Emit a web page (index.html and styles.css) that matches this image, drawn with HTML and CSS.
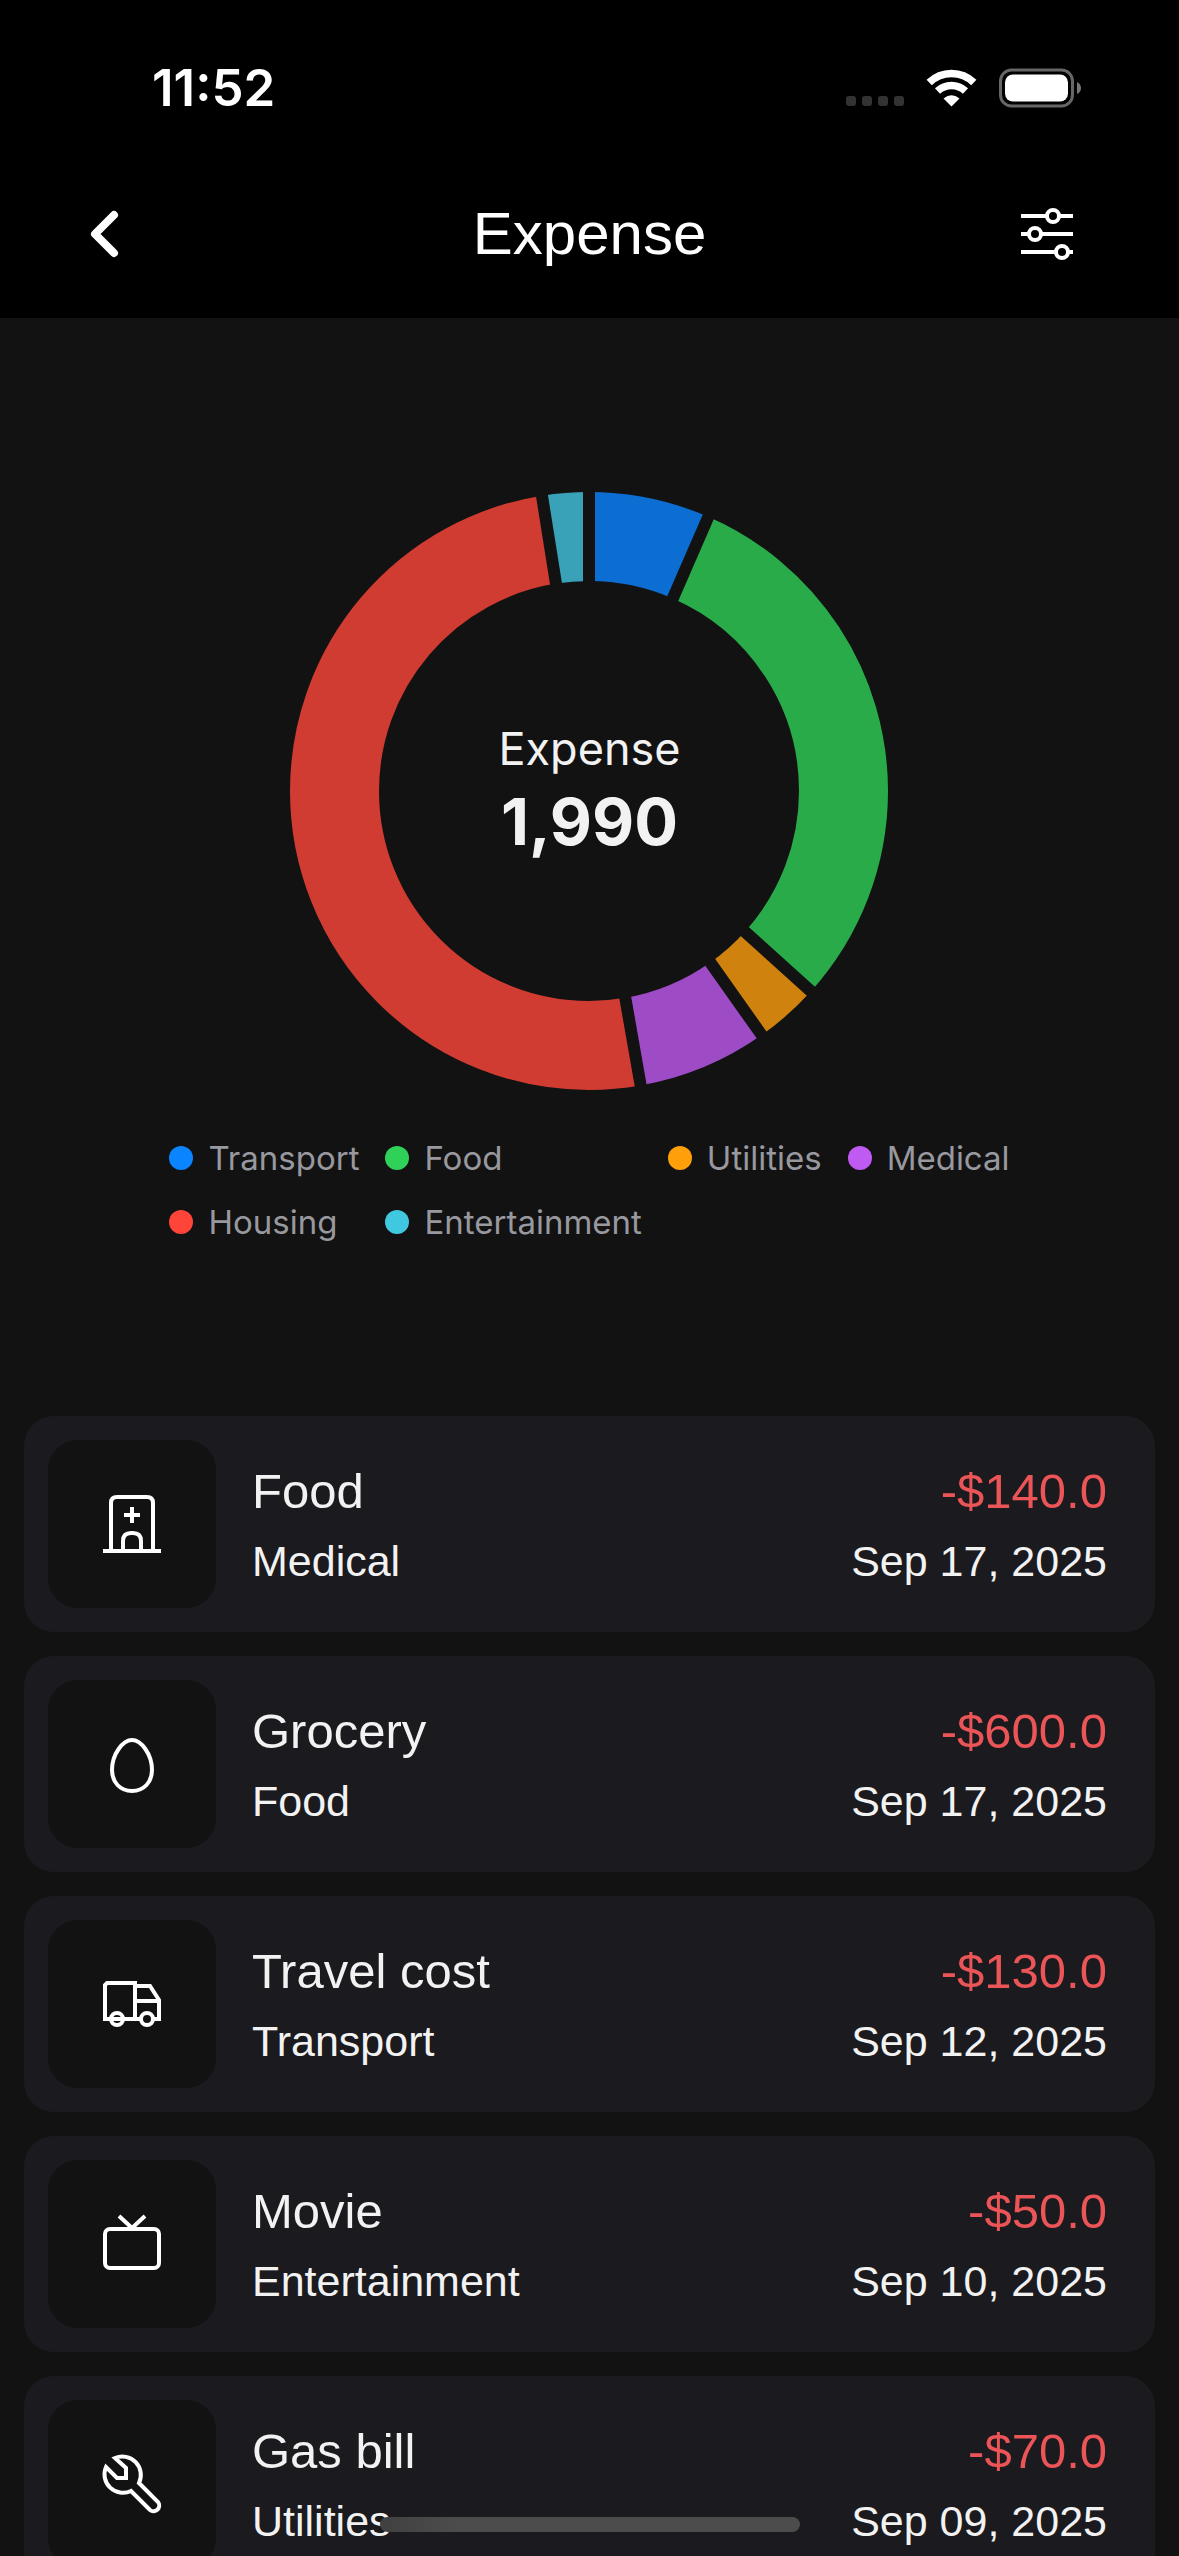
FILE: index.html
```html
<!DOCTYPE html>
<html lang="en">
<head>
  <meta charset="utf-8">
  <meta name="viewport" content="width=device-width, initial-scale=1">
  <title>Expense</title>
  <link rel="stylesheet" href="styles.css">
</head>
<body>
<div class="app">
  <header class="header">
    <div class="status">
      <span class="status-time">11:52</span>
      <div class="status-icons">
        <svg class="status-signal" width="58" height="10" viewBox="0 0 58 10" fill="#333" aria-hidden="true">
          <rect width="10" height="10" rx="3"/><rect x="16" width="10" height="10" rx="3"/><rect x="32" width="10" height="10" rx="3"/><rect x="48" width="10" height="10" rx="3"/>
        </svg>
        <svg width="51" height="38" viewBox="0 0 51 38" fill="none" stroke="#fff" aria-hidden="true">
          <path d="M3.200 13.500A32 32 0 0 1 47.800 13.500" stroke-width="7.500"/>
          <path d="M11.500 22A20.500 20.500 0 0 1 39.500 22" stroke-width="7.500"/>
          <path d="M25.500 37.500L17.500 29.500Q25.500 23 33.500 29.500Z" fill="#fff" stroke="none"/>
        </svg>
        <svg width="83" height="40" viewBox="0 0 83 40" aria-hidden="true">
          <rect x="1.500" y="2" width="72" height="36" rx="11" fill="none" stroke="#666" stroke-width="3"/>
          <rect x="6" y="6.500" width="63" height="27" rx="8" fill="#fff"/>
          <path d="M78 14Q82 16 82 20T78 26Z" fill="#777"/>
        </svg>
      </div>
    </div>
    <nav class="nav">
      <button class="icon-button" type="button" aria-label="Back">
        <svg width="72" height="72" viewBox="0 0 72 72" fill="none" stroke="#fff" stroke-width="8" stroke-linecap="round" stroke-linejoin="round"><path d="M42 17L23 36L42 55"/></svg>
      </button>
      <h1 class="nav-title">Expense</h1>
      <button class="icon-button icon-button-end" type="button" aria-label="Filters">
        <svg width="72" height="72" viewBox="0 0 72 72" fill="none" stroke="#fff" stroke-width="4"><path d="M10 18H62M10 36H62M10 54H62"/><g fill="#000"><circle cx="42" cy="18" r="6"/><circle cx="24" cy="36" r="6"/><circle cx="51" cy="54" r="6"/></g></svg>
      </button>
    </nav>
  </header>

  <main class="content">
    <section class="chart" aria-label="Expense by category">
      <div class="donut">
        <svg class="donut-ring" viewBox="0 0 600 600" aria-hidden="true">
          <g fill="none" stroke-width="89" transform="rotate(-90 299 300) translate(-1 0)">
            <circle cx="300" cy="300" r="254.500" pathLength="1990" stroke="#0c6ed2" stroke-dasharray="130 1860"/>
            <circle cx="300" cy="300" r="254.500" pathLength="1990" stroke="#2aab4a" stroke-dasharray="600 1390" stroke-dashoffset="-130"/>
            <circle cx="300" cy="300" r="254.500" pathLength="1990" stroke="#cf820e" stroke-dasharray="70 1920" stroke-dashoffset="-730"/>
            <circle cx="300" cy="300" r="254.500" pathLength="1990" stroke="#9e4bc6" stroke-dasharray="140 1850" stroke-dashoffset="-800"/>
            <circle cx="300" cy="300" r="254.500" pathLength="1990" stroke="#d03c32" stroke-dasharray="1000 990" stroke-dashoffset="-940"/>
            <circle cx="300" cy="300" r="254.500" pathLength="1990" stroke="#39a2b8" stroke-dasharray="50 1940" stroke-dashoffset="-1940"/>
          </g>
          <g stroke="#121212" stroke-width="12">
            <path d="M299 0V100"/>
            <path d="M299 0V100" transform="rotate(23.520 299 300)"/>
            <path d="M299 0V100" transform="rotate(132.060 299 300)"/>
            <path d="M299 0V100" transform="rotate(144.720 299 300)"/>
            <path d="M299 0V100" transform="rotate(170.050 299 300)"/>
            <path d="M299 0V100" transform="rotate(350.950 299 300)"/>
          </g>
        </svg>
        <div class="donut-label">
          <span class="donut-name">Expense</span>
          <strong class="donut-total">1,990</strong>
        </div>
      </div>
      <ul class="legend">
        <li class="legend-item transport">Transport</li>
        <li class="legend-item food">Food</li>
        <li class="legend-item utilities">Utilities</li>
        <li class="legend-item medical">Medical</li>
        <li class="legend-item housing">Housing</li>
        <li class="legend-item entertainment">Entertainment</li>
      </ul>
    </section>

    <ul class="list">
      <li class="card">
        <div class="tile"><svg class="icon" viewBox="0 0 72 72" aria-hidden="true"><path d="M7 63H65M15 63V15Q15 9 21 9H51Q57 9 57 15V63M27 63V53Q27 45 35 45H37Q45 45 45 53V63M36 19V35M28 27H44"/></svg></div>
        <div class="card-text"><span class="card-title">Food</span><span class="card-sub">Medical</span></div>
        <div class="card-text card-end"><span class="card-title amount">-$140.0</span><span class="card-sub">Sep 17, 2025</span></div>
      </li>
      <li class="card">
        <div class="tile"><svg class="icon" viewBox="0 0 72 72" aria-hidden="true"><path d="M36 12C45 12 56 26 56 42C56 54 48 63 36 63S16 54 16 42C16 26 27 12 36 12Z"/></svg></div>
        <div class="card-text"><span class="card-title">Grocery</span><span class="card-sub">Food</span></div>
        <div class="card-text card-end"><span class="card-title amount">-$600.0</span><span class="card-sub">Sep 17, 2025</span></div>
      </li>
      <li class="card">
        <div class="tile"><svg class="icon" viewBox="0 0 72 72" aria-hidden="true"><path d="M15 51H9V17L11 15H39V51M15 51H45M57 51H63V32L54 18H39M39 33H63"/><circle cx="21" cy="51" r="6"/><circle cx="51" cy="51" r="6"/></svg></div>
        <div class="card-text"><span class="card-title">Travel cost</span><span class="card-sub">Transport</span></div>
        <div class="card-text card-end"><span class="card-title amount">-$130.0</span><span class="card-sub">Sep 12, 2025</span></div>
      </li>
      <li class="card">
        <div class="tile"><svg class="icon" viewBox="0 0 72 72" aria-hidden="true"><rect x="9" y="21" width="54" height="39" rx="5"/><path d="M23 8L36 20L49 8"/></svg></div>
        <div class="card-text"><span class="card-title">Movie</span><span class="card-sub">Entertainment</span></div>
        <div class="card-text card-end"><span class="card-title amount">-$50.0</span><span class="card-sub">Sep 10, 2025</span></div>
      </li>
      <li class="card">
        <div class="tile"><svg class="icon" viewBox="0 0 72 72" aria-hidden="true"><path d="M19 10L30 20V30H21L10 19A18.500 18.500 0 0 0 35 43L54 62A5.700 5.700 0 0 0 62 54L43 35A18.500 18.500 0 0 0 19 10Z"/></svg></div>
        <div class="card-text"><span class="card-title">Gas bill</span><span class="card-sub">Utilities</span></div>
        <div class="card-text card-end"><span class="card-title amount">-$70.0</span><span class="card-sub">Sep 09, 2025</span></div>
      </li>
    </ul>
  </main>
  <div class="home-indicator"></div>
</div>
</body>
</html>
```
FILE: styles.css
```css
* {
  box-sizing: border-box;
}

body {
  margin: 0;
  background: #121212;
  color: #f2f2f2;
  font-family: "Liberation Sans", Arial, sans-serif;
}

ul {
  margin: 0;
  padding: 0;
  list-style: none;
}

svg {
  display: block;
}

.app {
  display: flex;
  flex-direction: column;
  height: 100vh;
  overflow: hidden;
}

/* Header */
.header {
  flex: none;
  padding-bottom: 26px;
  background: #000;
  color: #fff;
}

.status {
  display: flex;
  align-items: center;
  justify-content: space-between;
  height: 176px;
  padding: 0 97px 0 152px;
}

.status-time {
  font: 600 51px/60px Inter, sans-serif;
}

.status-icons {
  display: flex;
  align-items: center;
  gap: 22px;
}

.status-signal {
  align-self: flex-end;
  margin-bottom: 2px;
}

.nav {
  display: grid;
  grid-template-columns: 1fr auto 1fr;
  align-items: center;
  height: 116px;
  padding: 0 96px 0 72px;
}

.nav-title {
  margin: 0;
  padding-left: 24px;
  font-size: 60px;
  line-height: 72px;
  font-weight: 400;
}

.icon-button {
  width: 72px;
  height: 72px;
  padding: 0;
  border: 0;
  background: none;
}

.icon-button-end {
  justify-self: end;
}

/* Scrolling content */
.content {
  flex: 1;
  min-height: 0;
  overflow-y: auto;
  scrollbar-width: none;
}

.chart {
  display: flex;
  flex-direction: column;
  align-items: center;
  gap: 47px;
  padding: 173px 24px 174px;
}

.donut {
  position: relative;
  width: 600px;
  max-width: 100%;
}

.donut-label {
  position: absolute;
  inset: 0;
  display: flex;
  flex-direction: column;
  align-items: center;
  justify-content: center;
  font-family: Inter, sans-serif;
}

.donut-name {
  font-size: 45px;
  line-height: 62px;
}

.donut-total {
  font-size: 65px;
  line-height: 84px;
  font-weight: 700;
}

.legend {
  display: grid;
  grid-template-columns: repeat(4, max-content);
  gap: 24px 26px;
}

.legend-item {
  display: flex;
  align-items: center;
  gap: 15px;
  color: #98989f;
  font: 400 33px/40px Inter, sans-serif;
}

.legend-item::before {
  content: "";
  width: 24px;
  height: 24px;
  border-radius: 50%;
  background: currentColor;
}

.transport::before { background: #0a84ff; }
.food::before { background: #30d158; }
.utilities::before { background: #ff9f0a; }
.medical::before { background: #bf5af2; }
.housing::before { background: #ff453a; }
.entertainment::before { background: #40c8e0; }

/* Transactions */
.list {
  display: flex;
  flex-direction: column;
  gap: 24px;
  padding: 0 24px 72px;
}

.card {
  display: flex;
  align-items: center;
  gap: 36px;
  padding: 24px 48px 24px 24px;
  border-radius: 30px;
  background: #1b1a1e;
}

.tile {
  display: grid;
  place-items: center;
  width: 168px;
  height: 168px;
  border-radius: 30px;
  background: #121212;
}

.icon {
  width: 72px;
  height: 72px;
  fill: none;
  stroke: #fff;
  stroke-width: 4;
}

.card-text {
  display: flex;
  flex-direction: column;
}

.card-end {
  margin-left: auto;
  align-items: flex-end;
}

.card-title {
  font-size: 49px;
  line-height: 74px;
}

.card-sub {
  font-size: 43px;
  line-height: 66px;
}

.amount {
  color: #ec5557;
}

.home-indicator {
  position: fixed;
  bottom: 24px;
  left: 50%;
  width: 420px;
  height: 15px;
  margin-left: -210px;
  border-radius: 8px;
  background: linear-gradient(90deg, #404040, #4c4c4c 18%);
}
```
